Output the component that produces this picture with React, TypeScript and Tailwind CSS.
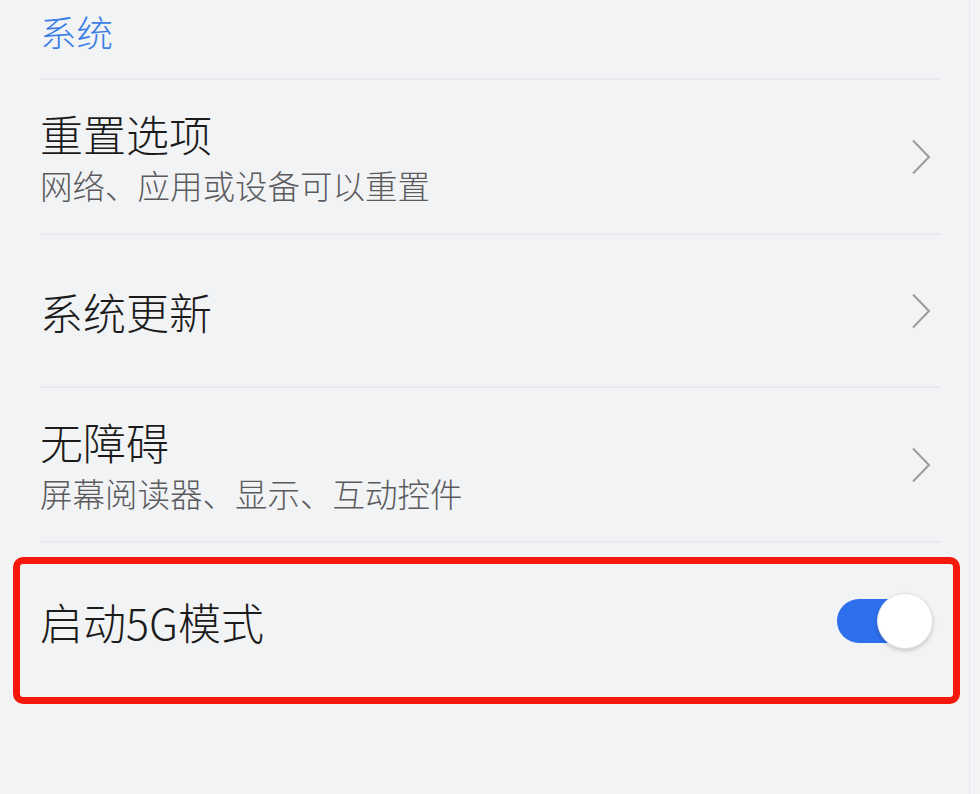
import React from "react";

const font = { fontFamily: '"Noto Sans CJK SC", "Noto Sans", sans-serif' };

function Chevron() {
  return (
    <svg width="20" height="36" viewBox="0 0 20 36" className="shrink-0">
      <polyline points="2,1.5 18,18 2,34.5" fill="none" stroke="#9c9c9c" strokeWidth="2" strokeLinejoin="miter" />
    </svg>
  );
}

function Row({ title, sub, h }: { title: string; sub?: string; h: string }) {
  return (
    <div className={`flex items-center justify-between border-b-2 border-[#e9eaed] ${h}`}>
      <div className="flex flex-col">
        <div className="text-[43px] leading-[50px] font-light text-[#1b1b1b]">{title}</div>
        {sub && <div className="mt-[7px] text-[32.5px] leading-[40px] font-light text-[#5b5b5e]">{sub}</div>}
      </div>
      <div className="mr-[9px]">
        <Chevron />
      </div>
    </div>
  );
}

export default function App() {
  return (
    <div className="w-[980px] h-[794px] bg-[#f2f3f5] overflow-hidden flex" style={font}>
      <div className="w-[969px] flex flex-col">
        <div className="ml-[40px] w-[900px] h-[80px] border-b-2 border-[#e9eaed] pt-[10px]">
          <div className="text-[36.5px] leading-[44px] font-light text-[#3b7ee6]">系统</div>
        </div>
        <div className="ml-[40px] w-[900px]">
          <Row title="重置选项" sub="网络、应用或设备可以重置" h="h-[155px]" />
          <Row title="系统更新" h="h-[153px]" />
          <Row title="无障碍" sub="屏幕阅读器、显示、互动控件" h="h-[155px]" />
        </div>
        <div className="mt-[14px] ml-[13px] w-[947px] h-[147px] border-[7px] border-[#f5190c] rounded-[10px] flex items-center justify-between pl-[20px] pr-[20px] pb-[20px]">
          <div className="text-[43px] leading-[50px] font-light text-[#1b1b1b]">启动5G模式</div>
          <div className="relative w-[96px] h-[56px]">
            <div className="absolute left-0 top-[6px] w-[84px] h-[44px] rounded-full bg-[#2e6fee]" />
            <div className="absolute right-0 top-0 w-[56px] h-[56px] rounded-full bg-white border border-[#e2e3e6] shadow-[0_2px_4px_rgba(0,0,0,0.18)]" />
          </div>
        </div>
      </div>
      <div className="w-[1px] h-full bg-[#e6e7ea]" />
    </div>
  );
}
